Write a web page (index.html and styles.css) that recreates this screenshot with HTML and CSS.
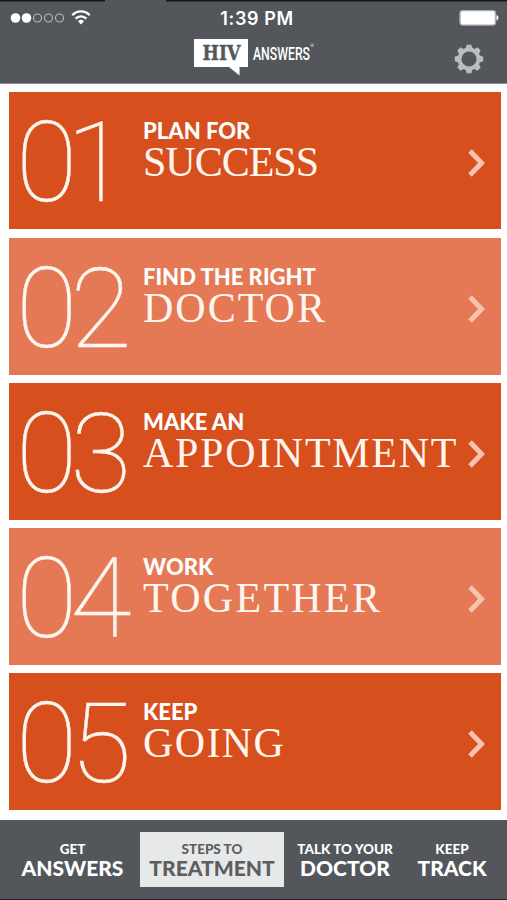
FILE: index.html
```
<!DOCTYPE html>
<html lang="en">
<head>
  <meta charset="UTF-8">
  <meta name="viewport" content="width=device-width, initial-scale=1.0">
  <title>HIV Answers - Steps to Treatment</title>
  <link rel="stylesheet" href="styles.css">
</head>
<body>
  <header class="header">
    <div class="status-bar">
      <svg class="signal" width="82" height="20" viewBox="0 0 82 20">
        <circle cx="6.500" cy="10" r="4.8" fill="#fff"/>
        <circle cx="17.500" cy="10" r="4.8" fill="#fff"/>
        <circle cx="28.500" cy="10" r="4"/>
        <circle cx="39.500" cy="10" r="4"/>
        <circle cx="50.500" cy="10" r="4"/>
        <g fill="none" stroke="#fff" stroke-width="2.3">
          <path d="M63.3 7.2a12 12 0 0 1 17.4 0"/>
          <path d="M66.6 10.6a7.5 7.5 0 0 1 10.8 0"/>
        </g>
        <path d="M69 13.2a4.4 4.4 0 0 1 6 0L72 16.6z" fill="#fff"/>
      </svg>
      <span class="time">1:39 PM</span>
      <svg class="battery" width="40" height="18" viewBox="0 0 40 18">
        <rect x="1" y="1.6" width="35.5" height="14.5" rx="2.5" fill="#fff" stroke="#a9acaf" stroke-width="1.4"/>
        <path d="M37.5 6v5.6q2-.6 2-2.8t-2-2.8z" fill="#fff"/>
      </svg>
    </div>
    <div class="title-bar">
      <svg class="logo" width="126" height="40" viewBox="0 0 126 40">
        <path d="M0 1h54v28h-8.500v8.500L35 29H0z" fill="#fff"/>
        <text class="logo-hiv" x="8.500" y="21.500" textLength="38" lengthAdjust="spacingAndGlyphs">HIV</text>
        <text class="logo-answers" x="59" y="22" textLength="57" lengthAdjust="spacingAndGlyphs">ANSWERS</text>
        <text class="logo-mark" x="116.500" y="9">®</text>
      </svg>
      <svg class="gear" width="30" height="30" viewBox="-15 -15 30 30">
        <circle r="9.500" fill="none" stroke="#babdc0" stroke-width="3.800"/>
        <g fill="#babdc0">
          <path id="tooth" d="M-3.400-10.500-2.300-14.200H2.300L3.400-10.500z"/>
          <use href="#tooth" transform="rotate(45)"/>
          <use href="#tooth" transform="rotate(90)"/>
          <use href="#tooth" transform="rotate(135)"/>
          <use href="#tooth" transform="rotate(180)"/>
          <use href="#tooth" transform="rotate(225)"/>
          <use href="#tooth" transform="rotate(270)"/>
          <use href="#tooth" transform="rotate(315)"/>
        </g>
      </svg>
    </div>
  </header>

  <main class="steps">
    <a class="step dark">
      <span class="number first">01</span>
      <span class="label">
        <span class="small">PLAN FOR</span>
        <span class="big success">SUCCESS</span>
      </span>
      <svg class="arrow" width="20" height="30" viewBox="0 0 20 30"><path d="M3 3l11.500 12L3 27"/></svg>
    </a>
    <a class="step light">
      <span class="number">02</span>
      <span class="label">
        <span class="small">FIND THE RIGHT</span>
        <span class="big doctor">DOCTOR</span>
      </span>
      <svg class="arrow" width="20" height="30" viewBox="0 0 20 30"><path d="M3 3l11.500 12L3 27"/></svg>
    </a>
    <a class="step dark">
      <span class="number">03</span>
      <span class="label">
        <span class="small">MAKE AN</span>
        <span class="big appointment">APPOINTMENT</span>
      </span>
      <svg class="arrow" width="20" height="30" viewBox="0 0 20 30"><path d="M3 3l11.500 12L3 27"/></svg>
    </a>
    <a class="step light">
      <span class="number">04</span>
      <span class="label">
        <span class="small">WORK</span>
        <span class="big together">TOGETHER</span>
      </span>
      <svg class="arrow" width="20" height="30" viewBox="0 0 20 30"><path d="M3 3l11.500 12L3 27"/></svg>
    </a>
    <a class="step dark">
      <span class="number">05</span>
      <span class="label">
        <span class="small">KEEP</span>
        <span class="big going">GOING</span>
      </span>
      <svg class="arrow" width="20" height="30" viewBox="0 0 20 30"><path d="M3 3l11.500 12L3 27"/></svg>
    </a>
  </main>

  <nav class="tabs">
    <a class="tab tab-answers"><span class="tab-top">GET</span><span class="tab-main">ANSWERS</span></a>
    <a class="tab tab-treatment active"><span class="tab-top">STEPS TO</span><span class="tab-main">TREATMENT</span></a>
    <a class="tab tab-doctor"><span class="tab-top">TALK TO YOUR</span><span class="tab-main">DOCTOR</span></a>
    <a class="tab tab-track"><span class="tab-top">KEEP</span><span class="tab-main">TRACK</span></a>
  </nav>
</body>
</html>
```
FILE: styles.css
```
* {
  box-sizing: border-box;
}

body {
  margin: 0;
  width: 507px;
  height: 900px;
  overflow: hidden;
  display: flex;
  flex-direction: column;
  background: #fff;
  font-family: Lato, "Open Sans", sans-serif;
}

.header {
  height: 84px;
  flex: none;
  color: #fff;
  background: linear-gradient(90deg, #13171b 105px, #53575c 105px, #53575c 166px, #13171b 166px) top / 100% 1.5px no-repeat, #53575c;
  border-bottom: 1px solid #8d9094;
}

.status-bar {
  display: grid;
  grid-template-columns: 1fr auto 1fr;
  align-items: center;
  height: 36px;
  padding: 0 8px 0 9px;
}

.signal circle {
  stroke: #b9bbbe;
  stroke-width: 1.1;
  fill: none;
}

.signal circle[fill] {
  fill: #fff;
  stroke: none;
}

.time {
  font: 600 18px Inter, sans-serif;
  letter-spacing: 0.6px;
  padding-left: 6px;
}

.battery {
  justify-self: end;
}

.title-bar {
  display: flex;
  justify-content: space-between;
  padding: 2px 23px 0 194px;
}

.logo {
  overflow: visible;
}

.logo-hiv {
  font: bold 20px "DejaVu Serif", serif;
  fill: #53575c;
  stroke: #53575c;
  stroke-width: 0.4;
}

.logo-answers {
  font: 500 19px Roboto, sans-serif;
  fill: #fff;
}

.logo-mark {
  font: 4px Roboto, sans-serif;
  fill: #fff;
}

.gear {
  margin-top: 6px;
}

.steps {
  flex: none;
  height: 736px;
  display: grid;
  grid-template-rows: repeat(5, 1fr);
  gap: 8.2px;
  padding: 8.3px 6px 9.5px 9px;
}

.step {
  display: flex;
  align-items: flex-start;
  color: #fff6ef;
}

.dark {
  background: #d64f1c;
}

.light {
  background: #e57955;
}

.number {
  width: 134px;
  flex: none;
  padding: 31px 0 0 7px;
  font: 100 112px/80px Roboto, sans-serif;
  letter-spacing: -7px;
  white-space: nowrap;
  -webkit-text-stroke: 0.4px #fff6ef;
}

.first {
  letter-spacing: -11px;
}

.label {
  flex: 1;
  min-width: 0;
  padding-top: 27px;
  display: flex;
  flex-direction: column;
  white-space: nowrap;
}

.small {
  font-size: 22px;
  line-height: 24px;
  font-weight: 900;
  color: #fff;
}

.big {
  font: 42px/38px "Liberation Serif", serif;
}

.success { letter-spacing: -1px; }
.doctor { letter-spacing: 2px; }
.appointment { letter-spacing: 1.7px; }
.together { letter-spacing: 2.3px; }
.going { letter-spacing: 1.4px; }

.arrow {
  flex: none;
  margin: 56px 14px 0 0;
  fill: none;
  stroke: #f6c3ae;
  stroke-width: 5;
}

.tabs {
  flex: 1;
  display: flex;
  align-items: flex-start;
  padding-top: 12px;
  background: #53575c;
  border-bottom: 1px solid #202024;
  color: #fff;
}

.tab {
  height: 55px;
  padding-top: 9px;
  display: flex;
  flex-direction: column;
  align-items: center;
  font-weight: 900;
  white-space: nowrap;
}

.tab-answers { width: 140px; padding-left: 5px; }
.tab-treatment { width: 144px; }
.tab-doctor { width: 122px; }
.tab-track { width: 92px; }

.active {
  background: #e7e8e8;
  color: #5b5e62;
}

.tab-top {
  font-size: 13.5px;
  line-height: 17px;
}

.tab-main {
  font-size: 21px;
  line-height: 20px;
}
```
